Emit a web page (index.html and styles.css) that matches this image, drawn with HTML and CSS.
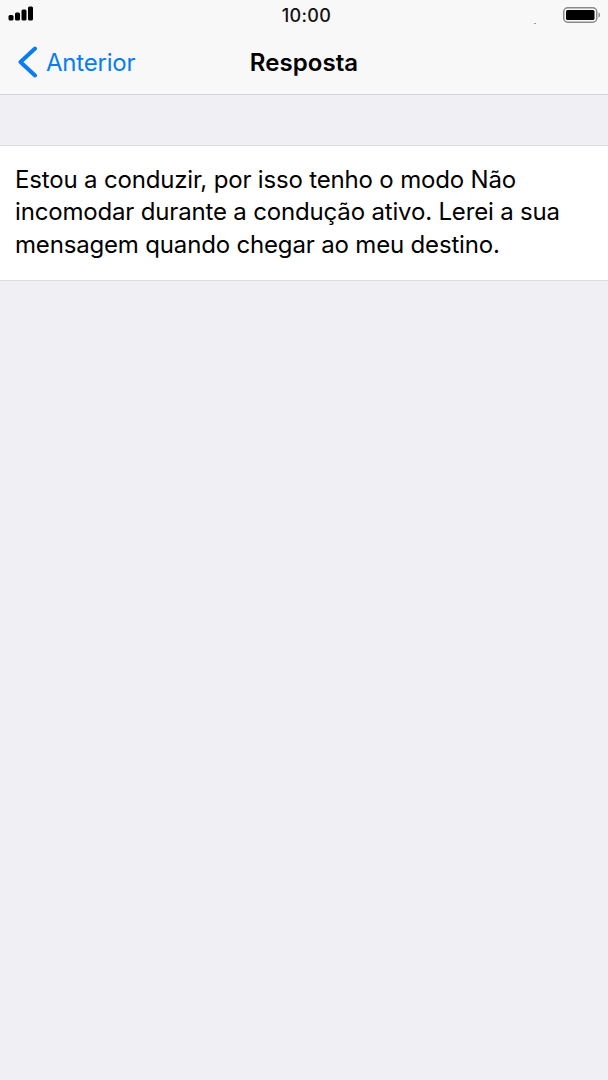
FILE: index.html
```html
<!DOCTYPE html>
<html lang="pt">
<head>
    <meta charset="UTF-8">
    <meta name="viewport" content="width=device-width, initial-scale=1.0">
    <title>Resposta</title>
    <link rel="stylesheet" href="styles.css">
</head>
<body>
    <header class="top">
        <div class="status">
            <svg class="signal" width="25" height="16" viewBox="0 0 25 16">
                <rect x="0.5" y="9" width="5" height="5.5" rx="1.5"/>
                <rect x="7" y="6.5" width="5" height="8" rx="1.5"/>
                <rect x="13.5" y="3.5" width="5" height="11" rx="1.5"/>
                <rect x="20" y="0.5" width="5" height="14" rx="1.5"/>
            </svg>
            <span class="time">10:00</span>
            <span class="speck"></span>
            <svg class="battery" width="37" height="18" viewBox="0 0 37 18">
                <rect x="0.75" y="1.75" width="33" height="14.5" rx="4" class="battery-shell"/>
                <rect x="3" y="4" width="28.5" height="10" rx="1.5"/>
                <path d="M35.5 6.5c1 .2 1.5 1.2 1.5 2.500s-.5 2.300-1.500 2.500z" class="battery-tip"/>
            </svg>
        </div>
        <nav class="nav">
            <a class="back">
                <svg width="22" height="32" viewBox="0 0 22 32">
                    <path d="M19 2.500 4.500 16 19 29.500" class="chevron"/>
                </svg>
                <span>Anterior</span>
            </a>
            <h1 class="title">Resposta</h1>
        </nav>
    </header>
    <main class="content">
        <p class="message">Estou a conduzir, por isso tenho o modo Não incomodar durante a condução ativo. Lerei a sua mensagem quando chegar ao meu destino.</p>
    </main>
</body>
</html>
```

FILE: styles.css
```css
html, body { margin: 0; padding: 0; height: 100%; overflow: hidden; }
body { background: #efeff4; font-family: Inter, "Liberation Sans", sans-serif; color: #000; }

.top { background: #f8f8f9; border-bottom: 1px solid #d4d4d8; box-sizing: border-box; height: 95px; }
.status { height: 31px; display: flex; align-items: center; justify-content: space-between; padding: 0 8px; position: relative; }
.signal { margin-top: -3px; }
.time { position: absolute; left: 0; right: 0; text-align: center; font-size: 18px; font-weight: 500; letter-spacing: 0.3px; top: 5px; color: #111; padding-left: 5px; }
.speck { position: absolute; left: 534px; top: 23px; width: 2px; height: 1px; background: #9a9a9a; }
.battery { margin-top: -2px; }
.battery-shell { fill: none; stroke: #8a8a8a; stroke-width: 1.5; }
.battery-tip { fill: #8a8a8a; }

.nav { height: 63px; position: relative; display: flex; align-items: center; justify-content: center; }
.back { position: absolute; left: 16px; top: 15px; display: flex; align-items: center; gap: 8px; color: #0a7cf2; font-size: 24px; letter-spacing: -0.2px; }
.chevron { fill: none; stroke: #0a7cf2; stroke-width: 4; stroke-linecap: round; stroke-linejoin: round; }
.title { margin: 0; font-size: 24px; font-weight: 600; line-height: 1; letter-spacing: 0.05px; }

.content { padding-top: 50px; }
.message { margin: 0; background: #fff; border-top: 1px solid #dcdce0; border-bottom: 1px solid #dcdce0; padding: 17.5px 15px 19px; font-size: 24px; line-height: 32.5px; letter-spacing: -0.17px; }
```
